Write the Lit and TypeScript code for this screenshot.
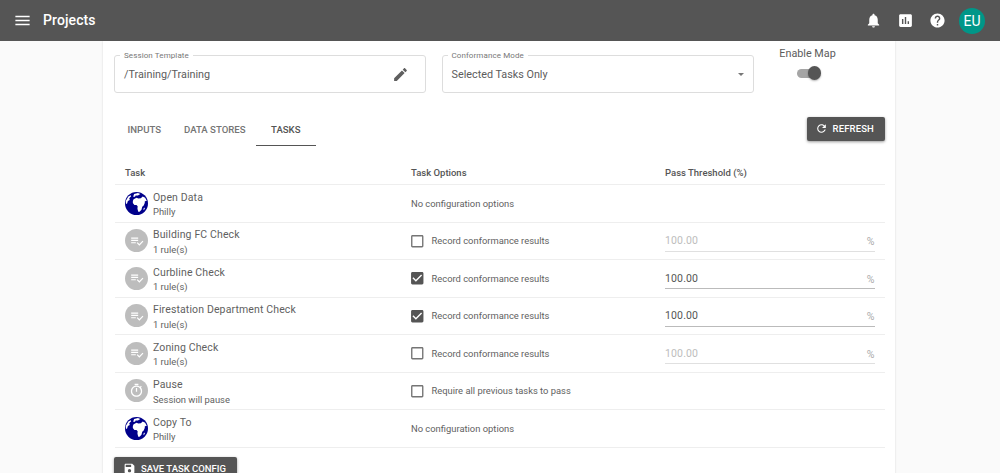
import { LitElement, html, css, svg } from "lit";
import { customElement } from "lit/decorators.js";

const P = {
  menu: "M3 18h18v-2H3v2zm0-5h18v-2H3v2zm0-7v2h18V6H3z",
  bell: "M12 22c1.1 0 2-.9 2-2h-4c0 1.1.89 2 2 2zm6-6v-5c0-3.07-1.64-5.64-4.5-6.32V4c0-.83-.67-1.5-1.5-1.5s-1.5.67-1.5 1.5v.68C7.63 5.36 6 7.92 6 11v5l-2 2v1h16v-1l-2-2z",
  chart: "M19 3H5c-1.1 0-2 .9-2 2v14c0 1.1.9 2 2 2h14c1.1 0 2-.9 2-2V5c0-1.1-.9-2-2-2zM9 17H7v-7h2v7zm4 0h-2V7h2v10zm4 0h-2v-4h2v4z",
  help: "M12 2C6.48 2 2 6.48 2 12s4.48 10 10 10 10-4.48 10-10S17.52 2 12 2zm1 17h-2v-2h2v2zm2.07-7.75l-.9.92C13.45 12.9 13 13.5 13 15h-2v-.5c0-1.1.45-2.1 1.17-2.83l1.24-1.26c.37-.36.59-.86.59-1.41 0-1.1-.9-2-2-2s-2 .9-2 2H8c0-2.21 1.79-4 4-4s4 1.79 4 4c0 .88-.36 1.68-.93 2.25z",
  edit: "M3 17.25V21h3.75L17.81 9.94l-3.75-3.75L3 17.25zM20.71 7.04c.39-.39.39-1.02 0-1.41l-2.34-2.34c-.39-.39-1.02-.39-1.41 0l-1.83 1.83 3.75 3.75 1.83-1.83z",
  refresh: "M17.65 6.35C16.2 4.9 14.21 4 12 4c-4.42 0-7.99 3.58-7.99 8s3.57 8 7.99 8c3.73 0 6.84-2.55 7.73-6h-2.08c-.82 2.33-3.04 4-5.65 4-3.31 0-6-2.69-6-6s2.69-6 6-6c1.66 0 3.14.69 4.22 1.78L13 11h7V4l-2.35 2.35z",
  save: "M17 3H5c-1.11 0-2 .9-2 2v14c0 1.1.89 2 2 2h14c1.1 0 2-.9 2-2V7l-4-4zm-5 16c-1.66 0-3-1.34-3-3s1.34-3 3-3 3 1.34 3 3-1.34 3-3 3zm3-10H5V5h10v4z",
  rules: "M14 10H2v2h12v-2zm0-4H2v2h12V6zM2 16h8v-2H2v2zm19.5-4.5L23 13l-6.99 7-4.51-4.5L13 14l3.01 3 5.49-5.5z",
  timer: "M15 1H9v2h6V1zm-4 13h2V8h-2v6zm8.03-6.61l1.42-1.42c-.43-.51-.9-.99-1.41-1.41l-1.42 1.42C16.07 4.74 14.12 4 12 4c-4.97 0-9 4.03-9 9s4.02 9 9 9 9-4.03 9-9c0-2.12-.74-4.07-1.97-5.61zM12 20c-3.87 0-7-3.13-7-7s3.13-7 7-7 7 3.13 7 7-3.13 7-7 7z",
  box: "M19 5v14H5V5h14m0-2H5c-1.1 0-2 .9-2 2v14c0 1.1.9 2 2 2h14c1.1 0 2-.9 2-2V5c0-1.1-.9-2-2-2z",
  checked: "M19 3H5c-1.11 0-2 .9-2 2v14c0 1.1.89 2 2 2h14c1.11 0 2-.9 2-2V5c0-1.1-.89-2-2-2zm-9 14l-5-5 1.41-1.41L10 14.17l7.59-7.59L19 8l-9 9z",
};

const icon = (d: string, cls = "") =>
  html`<svg class="ic ${cls}" viewBox="0 0 24 24"><path d=${d}></path></svg>`;

const globe = html`<svg class="avatar-svg" viewBox="0 0 24 24">
  <circle cx="12" cy="12" r="12" fill="#00008b"></circle>
  ${svg`<path fill="#fff" d="M9.5 2.2 L13.5 1 L16 2 L13.5 3.6 L11 3.6 L10.5 5 L8.5 5 Z"></path>
  <path fill="#fff" d="M9 7.5 L12 6 L14 6.8 L16.5 6.4 L18.5 4.6 L21 6 L22.7 9 L21.5 9.6 L20.8 9 L20.6 11.5 L19.5 14 L18 15.5 L17.2 18.5 L15.2 20.5 L13.8 20.5 L13 17.5 L13.2 14.8 L12 13.6 L9.8 13.6 L8.2 11.6 L8.2 9.4 Z"></path>
  <path fill="#fff" d="M0.8 9.5 L3.5 4.8 L6 3.4 L6.4 4.4 L4.4 6.6 L5 8.4 L3 9.5 L2.2 12 L1 12.5 Z"></path>
  <path fill="#fff" d="M19.2 17.5 L20.5 16.2 L20.7 17.2 L19.6 19 Z"></path>`}
</svg>`;

const greyAvatar = (d: string, cls = "") =>
  html`<span class="avatar grey">${icon(d, cls)}</span>`;

type Row = {
  title: string;
  sub: string;
  kind: "globe" | "rules" | "timer";
  label?: string;
  checked?: boolean;
  threshold?: boolean;
};

const rows: Row[] = [
  { title: "Open Data", sub: "Philly", kind: "globe" },
  { title: "Building FC Check", sub: "1 rule(s)", kind: "rules", label: "Record conformance results", threshold: true },
  { title: "Curbline Check", sub: "1 rule(s)", kind: "rules", label: "Record conformance results", checked: true, threshold: true },
  { title: "Firestation Department Check", sub: "1 rule(s)", kind: "rules", label: "Record conformance results", checked: true, threshold: true },
  { title: "Zoning Check", sub: "1 rule(s)", kind: "rules", label: "Record conformance results", threshold: true },
  { title: "Pause", sub: "Session will pause", kind: "timer", label: "Require all previous tasks to pass" },
  { title: "Copy To", sub: "Philly", kind: "globe" },
];

@customElement("app-root")
export class AppRoot extends LitElement {
  static styles = css`
    :host {
      display: flex;
      flex-direction: column;
      height: 473px;
      overflow: hidden;
      background: #fafafa;
      font-family: Roboto, "Liberation Sans", sans-serif;
      color: rgba(0, 0, 0, 0.87);
    }
    .ic { width: 24px; height: 24px; fill: currentColor; display: block; flex: none; }
    .topbar {
      flex: none;
      height: 41px;
      background: #555;
      color: #fff;
      display: flex;
      align-items: center;
      padding: 0 10px 0 13px;
      position: relative;
      z-index: 2;
    }
    .topbar .menu { width: 19px; height: 19px; }
    .title { font-size: 14px; font-weight: 500; margin-left: 11px; letter-spacing: 0.1px; flex: 1; margin-top: -1px; }
    .topbar .act { width: 17px; height: 17px; margin-right: 11px; margin-left: 4px; }
    .eu {
      width: 26px; height: 26px; border-radius: 50%;
      background: #009688; color: #fff; font-size: 14px;
      display: flex; align-items: center; justify-content: center;
      margin-left: 2px; margin-right: 5px;
    }
    .card {
      flex: none;
      margin-left: 103px;
      width: 792px;
      box-sizing: border-box;
      background: #fff;
      box-shadow: 0 0 2px rgba(0, 0, 0, 0.14);
      padding: 14px 10px 0 11px;
    }
    .form { display: flex; gap: 15.5px; height: 38px; }
    .field {
      position: relative;
      width: 312px;
      height: 37.5px;
      box-sizing: border-box;
      border: 1px solid #ddd;
      border-radius: 3px;
      display: flex;
      align-items: center;
      justify-content: space-between;
      padding: 1px 9px 0 9px;
      font-size: 10.8px;
      color: #5c5c5c;
    }
    .field label {
      position: absolute;
      left: 5px; top: -5px;
      background: #fff;
      padding: 0 4px;
      font-size: 8px;
      line-height: 10px;
      color: #777;
      letter-spacing: 0.1px;
    }
    .field .edit { width: 17px; height: 17px; color: #5f5f5f; margin-right: 7px; }
    .caret { width: 0; height: 0; border-left: 3.5px solid transparent; border-right: 3.5px solid transparent; border-top: 3.5px solid #777; }
    .toggle {
      width: 77px; margin-top: -8px;
      display: flex; flex-direction: column; align-items: center;
      font-size: 10.8px; color: #5c5c5c; gap: 8.5px;
    }
    .switch { position: relative; width: 23px; height: 9px; border-radius: 5px; background: #a5a5a5; margin-left: 1px; flex: none; }
    .switch::after {
      content: ""; position: absolute; right: -1.5px; top: -2.5px;
      width: 13.5px; height: 13.5px; border-radius: 50%;
      background: #555;
      box-shadow: 0 1px 2px rgba(0,0,0,.3);
    }
    .tabrow { display: flex; align-items: center; justify-content: space-between; margin-top: 20.5px; padding-left: 2px; }
    .tabs { display: flex; }
    .tab {
      height: 32px; box-sizing: border-box; padding: 0 11.5px;
      display: flex; align-items: center;
      font-size: 9.6px; font-weight: 500; color: #757575;
      border-bottom: 1px solid transparent;
    }
    .tab.active { color: #555; border-bottom-color: #555; padding: 0 15.5px; margin-left: -1.5px; }
    .btn {
      display: inline-flex; align-items: center; gap: 5px;
      background: #555; color: #fff; border: 0; border-radius: 2px;
      font: 500 9.5px Roboto, sans-serif; letter-spacing: 0.15px;
      box-shadow: 0 1px 3px rgba(0,0,0,.4);
    }
    .btn .ic { width: 13px; height: 13px; }
    .refresh { height: 24px; padding: 0 11px 0 8px; margin-top: -2px; }
    .table { margin-top: 1px; margin-left: 1px; }
    .row {
      display: grid;
      grid-template-columns: 286px 254px 230px;
      height: 37.5px;
      box-sizing: border-box;
      border-bottom: 1px solid #eee;
      align-items: center;
    }
    .row.head { height: 38.5px; padding-top: 14px; font-size: 9.5px; font-weight: 500; color: #555; }
    .row.head > div { padding-left: 10px; }
    .task { display: flex; align-items: center; gap: 5px; padding-left: 10px; }
    .avatar { width: 23px; height: 23px; flex: none; border-radius: 50%; display: flex; align-items: center; justify-content: center; }
    .avatar-svg { width: 23px; height: 23px; display: block; flex: none; }
    .grey { background: #bdbdbd; color: #fff; }
    .grey .ic { width: 14px; height: 14px; }
    .grey .ic.t { width: 15px; height: 15px; }
    .names { display: flex; flex-direction: column; padding-top: 3.5px; }
    .name { font-size: 10.5px; line-height: 14px; color: #5f5f5f; letter-spacing: 0.13px; }
    .sub { font-size: 9.4px; line-height: 14px; color: #616161; margin-top: 0.5px; }
    .opt { padding-left: 10px; display: flex; align-items: center; gap: 8px; font-size: 9.4px; color: #616161; }
    .opt .ic { width: 16.5px; height: 16.5px; margin-left: -2px; margin-right: -2px; color: #757575; }
    .opt .ic.on { color: #555; }
    .thcell { align-self: start; padding: 8px 10.5px 0 10px; }
    .th {
      height: 21px; box-sizing: border-box;
      border-bottom: 1px solid #e0e0e0;
      display: flex; align-items: center; justify-content: space-between;
      font-size: 10.5px; color: #bdbdbd; letter-spacing: 0.15px;
    }
    .th.on { color: #555; border-bottom-color: #bbb; }
    .pct { font-size: 10.5px; color: #aaa; margin-top: 2px; }
    .save { height: 24px; padding: 0 11px 0 8.5px; margin-top: 9px; gap: 5.5px; letter-spacing: 0; }
  `;

  renderRow(r: Row) {
    return html`<div class="row">
      <div class="task">
        ${r.kind === "globe" ? globe : r.kind === "rules" ? greyAvatar(P.rules) : greyAvatar(P.timer, "t")}
        <div class="names"><span class="name">${r.title}</span><span class="sub">${r.sub}</span></div>
      </div>
      <div class="opt">
        ${r.label
          ? html`${icon(r.checked ? P.checked : P.box, r.checked ? "on" : "")}<span>${r.label}</span>`
          : html`<span>No configuration options</span>`}
      </div>
      <div class="thcell">
        ${r.threshold
          ? html`<div class="th ${r.checked ? "on" : ""}"><span>100.00</span><span class="pct">%</span></div>`
          : ""}
      </div>
    </div>`;
  }

  render() {
    return html`
      <header class="topbar">
        ${icon(P.menu, "menu")}
        <span class="title">Projects</span>
        ${icon(P.bell, "act")} ${icon(P.chart, "act")} ${icon(P.help, "act")}
        <span class="eu">EU</span>
      </header>
      <main class="card">
        <div class="form">
          <div class="field">
            <label>Session Template</label>
            <span>/Training/Training</span>
            ${icon(P.edit, "edit")}
          </div>
          <div class="field">
            <label>Conformance Mode</label>
            <span>Selected Tasks Only</span>
            <span class="caret"></span>
          </div>
          <div class="toggle"><span>Enable Map</span><span class="switch"></span></div>
        </div>
        <div class="tabrow">
          <div class="tabs">
            <div class="tab">INPUTS</div>
            <div class="tab">DATA STORES</div>
            <div class="tab active">TASKS</div>
          </div>
          <button class="btn refresh">${icon(P.refresh)}REFRESH</button>
        </div>
        <div class="table">
          <div class="row head"><div>Task</div><div>Task Options</div><div>Pass Threshold (%)</div></div>
          ${rows.map((r) => this.renderRow(r))}
        </div>
        <button class="btn save">${icon(P.save)}SAVE TASK CONFIG</button>
      </main>
    `;
  }
}
